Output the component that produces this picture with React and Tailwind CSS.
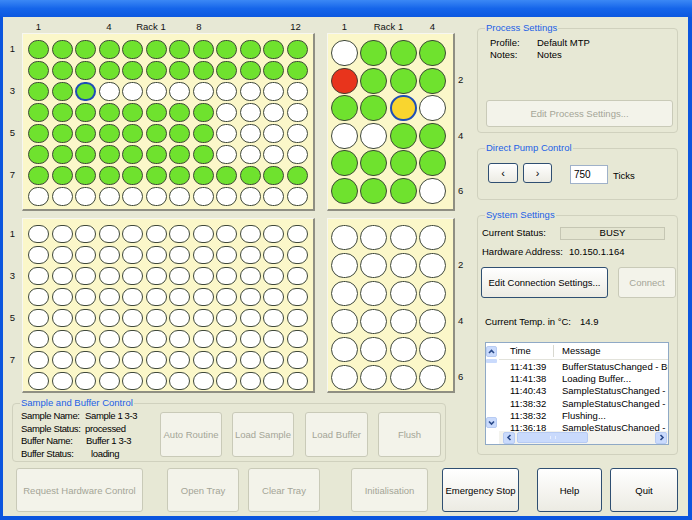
import React from "react";

const FONT = "font-['Liberation_Sans','Arial',sans-serif]";

const TOP_BIG = [
  "gggggggggggg",
  "gggggggggggg",
  "ggHwwwwwwwww",
  "ggggggggwwww",
  "ggggggggwwww",
  "ggggggggwwww",
  "gggggggggggg",
  "wwwwwwwwwwww",
];
const TOP_SMALL = ["wggg", "rggg", "ggYw", "wwgg", "gggg", "gggw"];

function Well({ c, size }) {
  let cls = "rounded-full border border-[#3f483a] bg-white";
  if (c === "g") cls = "rounded-full border border-[#3d4a35] bg-[#6fe22e]";
  if (c === "r") cls = "rounded-full border border-[#4a3a30] bg-[#e8341c]";
  if (c === "H") cls = "rounded-full border-2 border-[#1f4fb5] bg-[#6fe22e]";
  if (c === "Y") cls = "rounded-full border-2 border-[#1f4fb5] bg-[#f9d52f]";
  return <div className={cls + " " + size} />;
}

const plateBox =
  "border-t border-l border-r-2 border-b-2 border-t-[#f7f7f0] border-l-[#f7f7f0] border-r-[#8f8f82] border-b-[#8f8f82] bg-[#fbf7c9]";

function BigPlate({ rows, size, gapY, h }) {
  return (
    <div className={plateBox + " w-[293px] pl-[5px] pt-[6px] " + h}>
      <div className={"grid grid-cols-[repeat(12,21px)] gap-x-[2.5px] " + gapY}>
        {rows.map((r, i) =>
          r.split("").map((c, j) => <Well key={i + "-" + j} c={c} size={size} />)
        )}
      </div>
    </div>
  );
}

function SmallPlate({ rows, size, gapY, h }) {
  return (
    <div className={plateBox + " w-[128px] pl-[3px] pt-[6px] " + h}>
      <div className={"grid grid-cols-[repeat(4,27px)] gap-x-[2.3px] " + gapY}>
        {rows.map((r, i) =>
          r.split("").map((c, j) => <Well key={i + "-" + j} c={c} size={size} />)
        )}
      </div>
    </div>
  );
}

function Btn({ children, disabled, className }) {
  const base = disabled
    ? "border border-[#c9cab8] bg-[#f3f3ea] text-[#a4a597]"
    : "border border-[#2f4f72] bg-gradient-to-b from-[#ffffff] to-[#ecebe3] text-black";
  return (
    <div className={"flex items-center justify-center rounded-[3px] text-center leading-[11px] " + base + " " + className}>
      {children}
    </div>
  );
}

function Legend({ children }) {
  return <legend className="ml-[7px] px-[1px] leading-[12px] text-[#2261e6]">{children}</legend>;
}

function Arrow({ dir }) {
  const paths = {
    up: "M2 6 L4.5 3.5 L7 6",
    down: "M2 3.5 L4.5 6 L7 3.5",
    left: "M5.5 2 L3 4.5 L5.5 7",
    right: "M3.5 2 L6 4.5 L3.5 7",
  };
  return (
    <svg width="9" height="9" viewBox="0 0 9 9">
      <path d={paths[dir]} fill="none" stroke="#2a4a8a" strokeWidth="1.6" />
    </svg>
  );
}

function ScrollBtn({ dir, className }) {
  return (
    <div className={"flex items-center justify-center rounded-[2px] border border-[#b7cbf3] bg-[#c9dafc] " + className}>
      <Arrow dir={dir} />
    </div>
  );
}

const LOG = [
  ["11:41:39", "BufferStatusChanged - Buffer"],
  ["11:41:38", "Loading Buffer..."],
  ["11:40:43", "SampleStatusChanged - Sample"],
  ["11:38:32", "SampleStatusChanged - Sample"],
  ["11:38:32", "Flushing..."],
  ["11:36:18", "SampleStatusChanged - Sample"],
];

export default function App() {
  return (
    <div className={"flex h-[520px] w-[692px] flex-col bg-[#0b55de] text-[9.5px] text-[#111] " + FONT}>
      <div className="h-[17px] bg-gradient-to-b from-[#3b88f5] via-[#1565ea] to-[#0c58e0]" />
      <div className="ml-[3px] mr-[4px] mb-[4px] flex flex-1 flex-col bg-[#e7e8d5]">
        <div className="flex h-[451px]">
          {/* Left column */}
          <div className="flex w-[467px] flex-col">
            {/* column labels */}
            <div className="flex h-[16px] pt-[4px] leading-[12px]">
              <div className="w-[19px]" />
              <div className="w-[293px] pl-[6px]">
                <div className="grid grid-cols-[repeat(12,21px)] gap-x-[2.5px]">
                  <div className="col-start-1 text-center">1</div>
                  <div className="col-start-4 text-center">4</div>
                  <div className="col-start-5 col-span-3 pr-[10px] text-center">Rack 1</div>
                  <div className="col-start-8 pr-[8px] text-center">8</div>
                  <div className="col-start-12 pr-[3px] text-center">12</div>
                </div>
              </div>
              <div className="w-[12px]" />
              <div className="w-[128px] pl-[4px]">
                <div className="grid grid-cols-[repeat(4,27px)] gap-x-[2.3px]">
                  <div className="text-center">1</div>
                  <div className="col-span-2 text-center">Rack 1</div>
                  <div className="text-center">4</div>
                </div>
              </div>
            </div>

            {/* top plates */}
            <div className="flex h-[178px]">
              <div className="flex w-[19px] flex-col gap-y-[2px] pt-[7px]">
                {["1", "", "3", "", "5", "", "7", ""].map((l, i) => (
                  <div key={i} className="flex h-[19px] items-center justify-center">{l}</div>
                ))}
              </div>
              <BigPlate rows={TOP_BIG} size="w-[21px] h-[19px]" gapY="gap-y-[2px]" h="h-[178px]" />
              <div className="w-[12px]" />
              <SmallPlate rows={TOP_SMALL} size="w-[27px] h-[26px]" gapY="gap-y-[1.6px]" h="h-[178px]" />
              <div className="flex flex-col gap-y-[1.6px] pl-[3px] pt-[7px]">
                {["", "2", "", "4", "", "6"].map((l, i) => (
                  <div key={i} className="flex h-[26px] items-center">{l}</div>
                ))}
              </div>
            </div>

            {/* bottom plates */}
            <div className="mt-[7px] flex h-[175px]">
              <div className="flex w-[19px] flex-col gap-y-[3px] pt-[7px]">
                {["1", "", "3", "", "5", "", "7", ""].map((l, i) => (
                  <div key={i} className="flex h-[18px] items-center justify-center">{l}</div>
                ))}
              </div>
              <BigPlate
                rows={Array(8).fill("wwwwwwwwwwww")}
                size="w-[21px] h-[18px]"
                gapY="gap-y-[3px]"
                h="h-[175px]"
              />
              <div className="w-[12px]" />
              <SmallPlate
                rows={Array(6).fill("wwww")}
                size="w-[27px] h-[25px]"
                gapY="gap-y-[3px]"
                h="h-[175px]"
              />
              <div className="flex flex-col gap-y-[3px] pl-[3px] pt-[7px]">
                {["", "2", "", "4", "", "6"].map((l, i) => (
                  <div key={i} className="flex h-[25px] items-center">{l}</div>
                ))}
              </div>
            </div>

            {/* Sample and Buffer Control */}
            <fieldset className="ml-[9px] mt-[4px] h-[65px] w-[434px] rounded-[4px] border border-[#d0d1be]">
              <Legend>Sample and Buffer Control</Legend>
              <div className="flex pl-[8px]">
                <div className="w-[139px] shrink-0 whitespace-nowrap pt-[1px] leading-[12.7px] tracking-[-0.35px] text-black">
                  <div className="flex"><span className="w-[64px] shrink-0">Sample Name:</span><span>Sample 1 3-3</span></div>
                  <div className="flex"><span className="w-[64px] shrink-0">Sample Status:</span><span>processed</span></div>
                  <div className="flex"><span className="w-[65px] shrink-0">Buffer Name:</span><span>Buffer 1 3-3</span></div>
                  <div className="flex"><span className="w-[70px] shrink-0">Buffer Status:</span><span>loading</span></div>
                </div>
                <Btn disabled className="mt-[3px] h-[45px] w-[62px]">Auto Routine</Btn>
                <Btn disabled className="ml-[10px] mt-[3px] h-[45px] w-[62px]">Load Sample</Btn>
                <Btn disabled className="ml-[11px] mt-[3px] h-[45px] w-[63px]">Load Buffer</Btn>
                <Btn disabled className="ml-[10px] mt-[3px] h-[45px] w-[63px]">Flush</Btn>
              </div>
            </fieldset>
          </div>

          {/* Right column */}
          <div className="flex flex-1 flex-col pl-[7px] pr-[10px] pt-[5px]">
            <fieldset className="h-[111px] rounded-[4px] border border-[#d0d1be]">
              <Legend>Process Settings</Legend>
              <div className="ml-[12px] pt-[3px] leading-[12px] text-black">
                <div className="flex"><span className="w-[47px]">Profile:</span><span>Default MTP</span></div>
                <div className="flex"><span className="w-[47px]">Notes:</span><span>Notes</span></div>
              </div>
              <Btn disabled className="ml-[8px] mt-[39px] h-[27px] w-[187px]">Edit Process Settings...</Btn>
            </fieldset>

            <fieldset className="mt-[9px] h-[58px] rounded-[4px] border border-[#d0d1be]">
              <Legend>Direct Pump Control</Legend>
              <div className="flex items-start pt-[9px]">
                <Btn className="ml-[10px] h-[20px] w-[30px] text-[11px]">‹</Btn>
                <Btn className="ml-[5px] h-[20px] w-[29px] text-[11px]">›</Btn>
                <div className="ml-[18px] mt-[2px] flex h-[19px] w-[38px] items-center border border-[#9fb1c9] bg-white pl-[3px] text-[10px] text-black">
                  750
                </div>
                <div className="ml-[5px] mt-[6px] text-black">Ticks</div>
              </div>
            </fieldset>

            <fieldset className="mt-[9px] h-[246px] rounded-[4px] border border-[#d0d1be]">
              <Legend>System Settings</Legend>
              <div className="pt-[6px] text-black">
                <div className="flex h-[13px] items-center">
                  <span className="ml-[4px] w-[78px]">Current Status:</span>
                  <div className="flex h-[13px] w-[105px] items-center justify-center border border-[#c5c6b3] bg-[#e4e5d1]">BUSY</div>
                </div>
                <div className="mt-[6px] flex h-[12px] items-center">
                  <span className="ml-[4px] w-[87px]">Hardware Address:</span>
                  <span>10.150.1.164</span>
                </div>
                <div className="mt-[9px] flex">
                  <Btn className="ml-[3px] h-[31px] w-[127px]">Edit Connection Settings...</Btn>
                  <Btn disabled className="ml-[10px] h-[31px] w-[58px]">Connect</Btn>
                </div>
                <div className="mt-[18px] flex h-[12px] items-center">
                  <span className="ml-[7px] w-[95px]">Current Temp. in °C:</span>
                  <span>14.9</span>
                </div>
                {/* Log list */}
                <div className="ml-[7px] mt-[14px] flex h-[103px] w-[184px] border border-[#8fa9c6] bg-white">
                  <div className="flex w-[13px] flex-col pt-[3px]">
                    <ScrollBtn dir="up" className="h-[11px] w-[11px]" />
                    <div className="mt-[2px] h-[4px] w-[11px] rounded-[1px] bg-[#c9dafc]" />
                    <div className="flex-1" />
                    <ScrollBtn dir="down" className="mb-[16px] h-[11px] w-[11px]" />
                  </div>
                  <div className="flex flex-1 flex-col overflow-hidden">
                    <div className="flex h-[17px] shrink-0 items-center border-b border-[#e2e2da] bg-white">
                      <span className="w-[54px] pl-[11px]">Time</span>
                      <span className="h-[12px] w-[1px] bg-[#d8d8d0]" />
                      <span className="pl-[8px]">Message</span>
                    </div>
                    <div className="flex-1 overflow-hidden pt-[1px] leading-[12.2px]">
                      {LOG.map(([t, m], i) => (
                        <div key={i} className="flex whitespace-nowrap">
                          <span className="w-[63px] shrink-0 pl-[11px]">{t}</span>
                          <span>{m}</span>
                        </div>
                      ))}
                    </div>
                    <div className="flex h-[13px] shrink-0 items-center gap-[2px] bg-[#f3f3ee] pl-[4px] pr-[1px]">
                      <ScrollBtn dir="left" className="h-[12px] w-[12px]" />
                      <div className="flex h-[11px] w-[71px] items-center justify-center rounded-[2px] border border-[#b7cbf3] bg-[#c9dafc]">
                        <div className="h-[3px] w-[6px] border-x border-[#e8efff]" />
                      </div>
                      <div className="flex-1" />
                      <ScrollBtn dir="right" className="h-[12px] w-[12px]" />
                    </div>
                  </div>
                </div>
              </div>
            </fieldset>
          </div>
        </div>

        {/* Bottom buttons */}
        <div className="flex h-[44px]">
          <Btn disabled className="ml-[13px] w-[127px]">Request Hardware Control</Btn>
          <Btn disabled className="ml-[24px] w-[72px]">Open Tray</Btn>
          <Btn disabled className="ml-[9px] w-[72px]">Clear Tray</Btn>
          <Btn disabled className="ml-[31px] w-[77px]">Initialisation</Btn>
          <Btn className="ml-[14px] w-[77px]">Emergency Stop</Btn>
          <Btn className="ml-[18px] w-[65px]">Help</Btn>
          <Btn className="ml-[8px] w-[68px]">Quit</Btn>
        </div>
      </div>
    </div>
  );
}
